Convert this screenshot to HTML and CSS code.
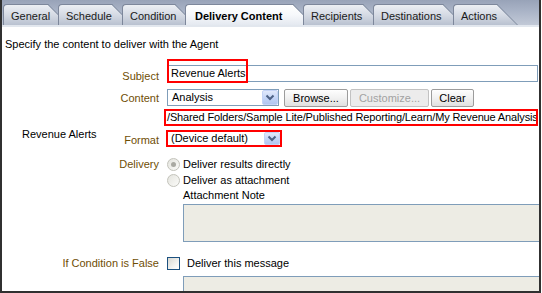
FILE: index.html
```html
<!DOCTYPE html>
<html>
<head>
<meta charset="utf-8">
<link rel="stylesheet" href="styles.css">
</head>
<body>
<div class="frame">
  <div class="tabstrip">
    <div class="tab t-general">General</div>
    <div class="tab t-schedule">Schedule</div>
    <div class="tab t-condition">Condition</div>
    <div class="tab tab-active t-delivery">Delivery Content</div>
    <div class="tab t-recipients">Recipients</div>
    <div class="tab t-destinations">Destinations</div>
    <div class="tab t-actions">Actions</div>
  </div>
  <div class="content">
    <p class="intro">Specify the content to deliver with the Agent</p>

    <div class="row row-subject">
      <div class="label">Subject</div>
      <div class="ctl ctl-rel">
        <input class="text-input" type="text" value="Revenue Alerts">
        <span class="callout"></span>
      </div>
    </div>

    <div class="row row-content">
      <div class="label">Content</div>
      <div class="ctl ctl-inline">
        <div class="select sel-content">
          <span class="val">Analysis</span>
          <span class="arrow"><svg width="10" height="7" viewBox="0 0 10 7"><path d="M1.5 1.5 L5 5 L8.5 1.5" fill="none" stroke="#4d6185" stroke-width="2"/></svg></span>
        </div>
        <button class="btn btn-browse">Browse...</button>
        <button class="btn btn-customize" disabled>Customize...</button>
        <button class="btn btn-clear">Clear</button>
      </div>
    </div>

    <div class="row row-path">
      <div class="label"></div>
      <div class="ctl">
        <div class="path">/Shared Folders/Sample Lite/Published Reporting/Learn/My Revenue Analysis</div>
      </div>
    </div>

    <div class="row row-format">
      <div class="label label-split">
        <span class="item-name">Revenue Alerts</span>
        <span class="format-label">Format</span>
      </div>
      <div class="ctl">
        <div class="select sel-format">
          <span class="val">(Device default)</span>
          <span class="arrow"><svg width="10" height="7" viewBox="0 0 10 7"><path d="M1.5 1.5 L5 5 L8.5 1.5" fill="none" stroke="#4d6185" stroke-width="2"/></svg></span>
        </div>
      </div>
    </div>

    <div class="row row-delivery">
      <div class="label label-tall">Delivery</div>
      <div class="ctl">
        <div class="opt"><span class="radio radio-on"></span><span>Deliver results directly</span></div>
        <div class="opt"><span class="radio"></span><span>Deliver as attachment</span></div>
        <div class="sub-label">Attachment Note</div>
        <div class="note-area"></div>
      </div>
    </div>

    <div class="row row-cond">
      <div class="label label-tall">If Condition is False</div>
      <div class="ctl">
        <div class="opt opt-check"><span class="check"></span><span>Deliver this message</span></div>
        <div class="note-area note-area-2"></div>
      </div>
    </div>
  </div>
</div>
</body>
</html>
```

FILE: styles.css
```css
* {
  box-sizing: border-box;
  margin: 0;
  padding: 0;
}

body {
  margin: 0;
  background: #fff;
  font-family: "Liberation Sans", Arial, sans-serif;
  font-size: 11px;
  color: #000;
}

.frame {
  width: 541px;
  height: 293px;
  border: 2px solid #303030;
  border-top: 0;
  overflow: hidden;
  background: #fff;
}

/* ---------- tabs ---------- */
.tabstrip {
  display: flex;
  align-items: flex-end;
  height: 27px;
  padding-left: 1px;
  background: linear-gradient(#98a3b8, #aab4c7 45%, #c2c9d7);
  border-bottom: 2px solid #e2e7ee;
}

.tab {
  position: relative;
  z-index: 0;
  flex: none;
  height: 21px;
  margin-right: 10px;
  padding: 2px 0 0 7px;
  line-height: 18px;
  white-space: nowrap;
  color: #1a1a1a;
  border-top: 1px solid #7d879b;
  border-left: 1px solid #7d879b;
  border-top-left-radius: 4px;
  background: linear-gradient(#eceff4, #d5dae4 50%, #b9c1d0);
}

.tab::after {
  content: "";
  position: absolute;
  top: -1px;
  bottom: 0;
  right: 0;
  width: 22px;
  z-index: -1;
  border-top: 1px solid #7d879b;
  border-right: 1px solid #7d879b;
  background: inherit;
  transform: skewX(45deg);
  transform-origin: 100% 0;
}

.tab-active {
  padding-left: 9px;
  font-weight: bold;
  color: #000;
  background: linear-gradient(#ffffff, #f6f8fb 50%, #e4e9f0);
}

.t-general { width: 45px; }
.t-schedule { width: 54px; }
.t-condition { width: 53px; }
.t-delivery { width: 108px; }
.t-recipients { width: 60px; }
.t-destinations { width: 70px; }
.t-actions { width: 44px; }

/* ---------- content ---------- */
.intro {
  margin-top: 10px;
  padding-left: 3px;
  line-height: 14px;
}

.row {
  display: flex;
}

.label {
  flex: none;
  width: 157px;
  text-align: right;
  color: #6f4e04;
  line-height: 14px;
}

.ctl {
  flex: 1;
  min-width: 0;
  margin-left: 8px;
}

.ctl-rel {
  position: relative;
}

.ctl-inline {
  display: flex;
  align-items: flex-start;
}

/* subject */
.row-subject {
  margin-top: 8px;
  height: 25px;
}
.row-subject .label {
  padding-top: 10px;
}
.text-input {
  display: block;
  margin-top: 6px;
  width: calc(100% - 1px);
  height: 17px;
  padding: 0 3px 1px;
  border: 1px solid #7f9db9;
  font: inherit;
  color: #000;
  background: #fff;
  outline: none;
}
.callout {
  position: absolute;
  left: 0;
  top: 0;
  width: 81px;
  height: 24px;
  border: 2px solid #f00;
}

/* content */
.row-content {
  height: 24px;
}
.row-content .label {
  padding-top: 7px;
}
.row-content .ctl {
  padding-top: 5px;
}

.select {
  display: flex;
  align-items: center;
  height: 17px;
  border: 1px solid #7f9db9;
  background: #fff;
  padding-left: 4px;
}
.select .val {
  flex: 1;
  white-space: nowrap;
  line-height: 13px;
}
.select .arrow {
  flex: none;
  align-self: stretch;
  width: 16px;
  display: flex;
  align-items: center;
  justify-content: center;
  border: 1px solid #c4d3f6;
  border-radius: 2px;
  background: linear-gradient(#e1e9fb, #c3d4f7 55%, #b2c6f0);
}
.sel-content {
  width: 112px;
  flex: none;
}

.btn {
  flex: none;
  height: 18px;
  margin-left: 2px;
  border: 1px solid #9c9c9c;
  border-radius: 2px;
  background: linear-gradient(#fefefe, #f1f1f1 50%, #e0e0e0);
  font: inherit;
  color: #000;
  text-align: center;
  line-height: 15px;
}
.btn-browse {
  width: 64px;
  margin-left: 5px;
}
.btn-customize {
  width: 79px;
  color: #a2a2a2;
  border-color: #c2c2c2;
  background: #ececec;
}
.btn-clear {
  width: 43px;
}

/* path */
.row-path {
  height: 19px;
}
.path {
  margin: 1px 0 0 -3px;
  width: calc(100% + 2px);
  height: 17px;
  border: 2px solid #f00;
  padding-left: 1px;
  line-height: 13px;
  letter-spacing: -0.14px;
  white-space: nowrap;
  overflow: hidden;
}

/* format */
.row-format {
  height: 22px;
}
.label-split {
  display: flex;
  justify-content: space-between;
}
.item-name {
  padding-left: 20px;
  color: #000;
}
.format-label {
  padding-top: 6px;
}
.row-format .ctl {
  padding-top: 3px;
}
.sel-format {
  width: 116px;
  margin-left: -1px;
  border: 2px solid #f00;
  padding-left: 3px;
}

/* delivery */
.row-delivery {
  padding-top: 7px;
}
.label-tall {
  line-height: 16px;
}
.opt {
  display: flex;
  align-items: center;
  gap: 3px;
  height: 16px;
  line-height: 16px;
  white-space: nowrap;
}
.radio {
  position: relative;
  flex: none;
  width: 13px;
  height: 13px;
  border-radius: 50%;
  border: 1px solid #c3c3bb;
  background: linear-gradient(135deg, #e4e4de, #fbfbf9);
}
.radio-on::after {
  content: "";
  position: absolute;
  left: 3px;
  top: 3px;
  width: 5px;
  height: 5px;
  border-radius: 50%;
  background: #a9a9a2;
}
.sub-label {
  padding-left: 16px;
  line-height: 15px;
}
.note-area {
  margin: 1px -4px 0 16px;
  height: 38px;
  border: 1px solid #7f9db9;
  background: #edece4;
}

/* condition */
.row-cond {
  margin-top: 13px;
}
.opt-check {
  gap: 7px;
}
.check {
  flex: none;
  width: 13px;
  height: 13px;
  border: 1px solid #1c5180;
  background: linear-gradient(135deg, #d8d8d2, #f6f6f4 70%, #ffffff);
}
.note-area-2 {
  margin-top: 5px;
  height: 30px;
}
```
